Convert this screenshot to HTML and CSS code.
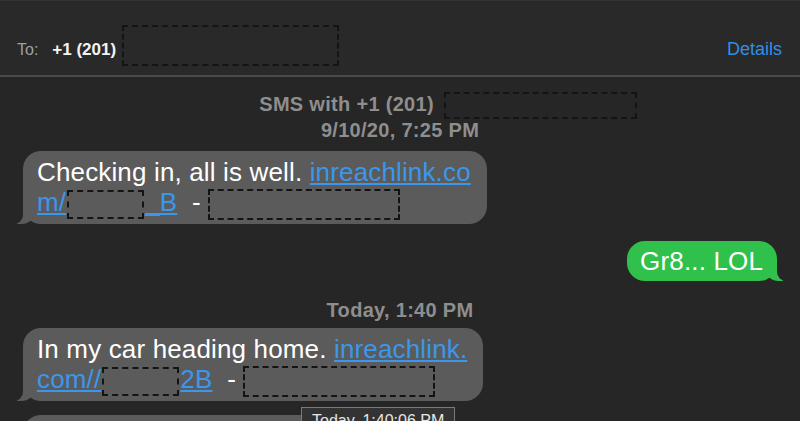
FILE: index.html
```html
<!DOCTYPE html>
<html lang="en">
  <head>
    <meta charset="UTF-8" />
    <meta name="viewport" content="width=device-width, initial-scale=1.0" />
    <title>Messages</title>
    <link rel="stylesheet" href="styles.css">
  </head>

  <body>
    <div id="wrap">
      <!-- recipient bar -->
      <header class="to-bar">
        <span class="to-label">To:</span>
        <span class="to-number">+1 (201)</span>
        <span class="redact r-to"></span>
        <a class="details">Details</a>
      </header>

      <!-- conversation -->
      <main class="thread">
        <p class="meta meta-sms">SMS with +1 (201) <span class="redact r-sms"></span></p>
        <p class="meta">9/10/20, 7:25 PM</p>

        <div class="bubble in">Checking in, all is well. <a class="link">inreachlink.co<br>m/<span class="redact r-code"></span>_B</a>&nbsp; - <span class="redact r-name"></span></div>

        <div class="bubble out">Gr8... LOL</div>

        <p class="meta meta-today">Today, 1:40 PM</p>

        <div class="bubble in b-second">In my car heading home. <a class="link">inreachlink.<br>com//<span class="redact r-code"></span>2B</a>&nbsp; - <span class="redact r-name"></span>
          <div class="tooltip">Today, 1:40:06 PM</div>
        </div>

        <div class="bubble in b-third">Checking in, all is well.<br>&nbsp;</div>
      </main>
    </div>
  </body>
</html>
```

FILE: styles.css
```css
html, body, p{
  margin: 0;
  padding: 0;
}

body{
  background-color: #262626;
  font-family: "Liberation Sans", Arial, sans-serif;
  height: 421px;
  overflow: hidden;
}

/* recipient bar */
.to-bar{
  display: flex;
  align-items: center;
  box-sizing: border-box;
  height: 77px;
  padding: 15px 18px 0 17px;
  background-color: #292929;
  border-top: 1px solid #333;
  border-bottom: 2px solid #4a4a4a;
}

.to-label{
  margin-top: 8px;
  font-size: 16px;
  color: #a0a0a0;
}

.to-number{
  margin: 8px 0 0 14px;
  font-size: 17px;
  font-weight: bold;
  color: #f4f4f4;
}

.details{
  margin: 8px 0 0 auto;
  font-size: 18px;
  color: #2f8ee6;
}

/* dashed blocks over private data */
.redact{
  display: inline-block;
  box-sizing: border-box;
  border: 2px dashed #141414;
  vertical-align: middle;
}

.r-to{
  width: 217px;
  height: 41px;
  margin-left: 6px;
}

.r-sms{
  width: 193px;
  height: 27px;
  margin: -2px 0 -2px 4px;
}

/* negative margins keep the line height of the bubble text */
.r-code{
  width: 77px;
  height: 29px;
  margin: -3px 1px;
}

.r-name{
  width: 192px;
  height: 31px;
  margin: -3px 0;
}

/* conversation */
.thread{
  padding: 14px 23px 0;
}

.meta{
  text-align: center;
  font-size: 20px;
  font-weight: bold;
  letter-spacing: .3px;
  line-height: 26px;
  color: #8e8e8e;
}

.meta-sms{
  padding-left: 96px;
}

.meta-today{
  margin: 16px 0 5px;
}

.bubble{
  position: relative;
  box-sizing: border-box;
  width: fit-content;
  max-width: 464px;
  padding: 6px 16px 7px 14px;
  border-radius: 18px;
  font-size: 26px;
  letter-spacing: .15px;
  line-height: 30px;
  color: #fff;
}

.bubble.in{
  margin-top: 8px;
  background-color: #5b5b5b;
}

.bubble.out{
  margin: 17px 0 0 auto;
  padding: 5px 14px 5px 13px;
  background-color: #2fc14c;
}

.b-second{
  margin-top: 0 !important;
}

.b-third{
  margin-top: 14px !important;
}

/* bubble tails */
.bubble::before,
.bubble::after{
  content: '';
  position: absolute;
  bottom: 0;
  height: 20px;
}

.bubble.in::before{
  left: -6px;
  width: 18px;
  background-color: #5b5b5b;
  border-bottom-right-radius: 14px 12px;
}

.bubble.in::after{
  left: -22px;
  width: 22px;
  background-color: #262626;
  border-bottom-right-radius: 9px;
}

.bubble.out::before{
  right: -6px;
  width: 18px;
  background-color: #2fc14c;
  border-bottom-left-radius: 14px 12px;
}

.bubble.out::after{
  right: -22px;
  width: 22px;
  background-color: #262626;
  border-bottom-left-radius: 9px;
}

.link{
  color: #3b97ec;
  text-decoration: underline;
  text-underline-offset: 2px;
}

/* hover tooltip */
.tooltip{
  position: absolute;
  z-index: 2;
  top: calc(100% + 6px);
  left: 278px;
  padding: 3px 10px;
  background-color: #333;
  border: 1px solid #7a7a7a;
  font-size: 16px;
  letter-spacing: 0;
  line-height: 20px;
  color: #e6e6e6;
  white-space: nowrap;
}
```
